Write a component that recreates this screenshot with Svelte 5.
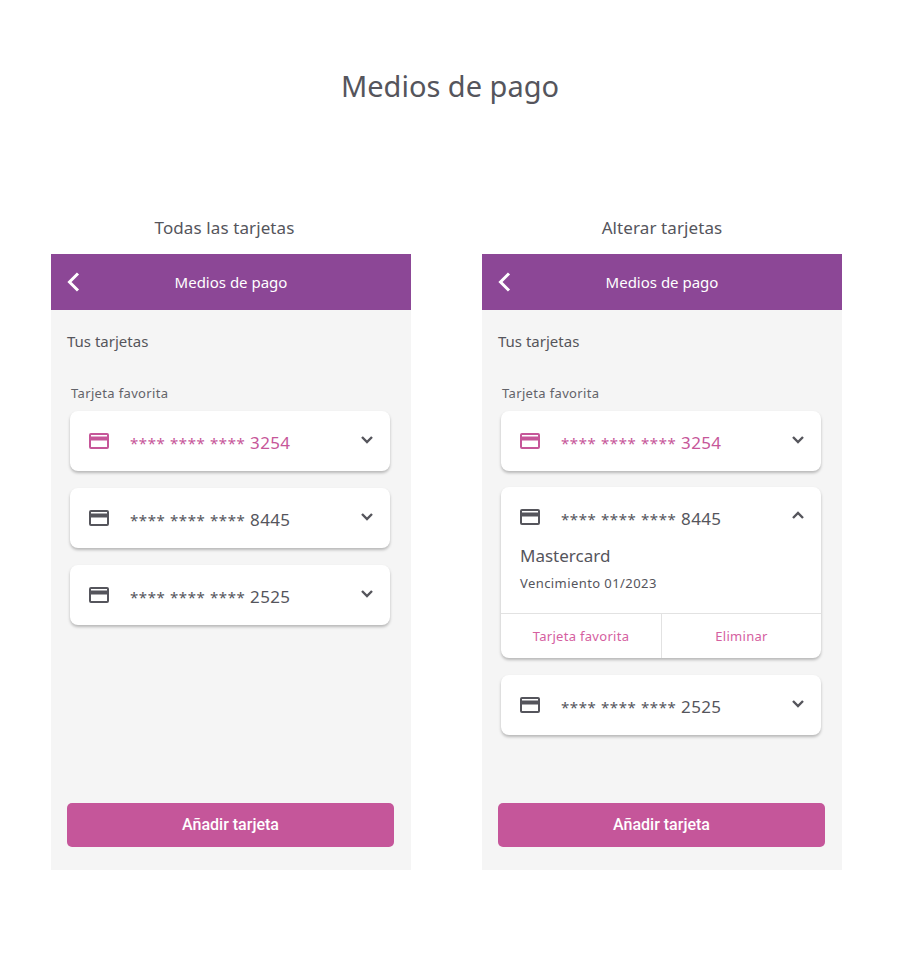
<script>
    const cards = [
        { number: "3254", favorite: true },
        { number: "8445" },
        { number: "2525" },
    ];

    const screens = [
        { label: "Todas las tarjetas", open: null },
        { label: "Alterar tarjetas", open: "8445" },
    ];
</script>

<main class="page">
    <h1>Medios de pago</h1>

    <div class="screens">
        {#each screens as screen}
            <section class="column">
                <h2>{screen.label}</h2>

                <div class="phone">
                    <header>
                        <svg class="back" width="16" height="22" viewBox="0 0 16 22">
                            <path d="M13 2.5 4.500 11l8.500 8.500" fill="none" stroke="#fff" stroke-width="3" />
                        </svg>
                        <span>Medios de pago</span>
                    </header>

                    <div class="body">
                        <p class="title">Tus tarjetas</p>
                        <p class="fav-label">Tarjeta favorita</p>

                        <div class="list">
                            {#each cards as card}
                                {@const isOpen = screen.open === card.number}
                                <article class="card" class:open={isOpen}>
                                    <div class="row" class:fav={card.favorite}>
                                        <svg class="card-icon" width="20" height="16" viewBox="0 0 20 16">
                                            <path
                                                fill="currentColor"
                                                fill-rule="evenodd"
                                                d="M2 0h16a2 2 0 0 1 2 2v12a2 2 0 0 1-2 2H2a2 2 0 0 1-2-2V2a2 2 0 0 1 2-2Zm0 2v1.400h16V2H2Zm0 5.600V14h16V7.600H2Z"
                                            />
                                        </svg>
                                        <span class="number"><span class="stars">**** **** ****</span> {card.number}</span>
                                        <svg class="chevron" width="14" height="9" viewBox="0 0 14 9">
                                            <path
                                                d={isOpen ? "M2 7l5-5 5 5" : "M2 2l5 5 5-5"}
                                                fill="none"
                                                stroke="#55555c"
                                                stroke-width="2.4"
                                            />
                                        </svg>
                                    </div>

                                    {#if isOpen}
                                        <div class="details">
                                            <p class="brand">Mastercard</p>
                                            <p class="expiry">Vencimiento 01/2023</p>
                                        </div>
                                        <div class="actions">
                                            <span>Tarjeta favorita</span>
                                            <span>Eliminar</span>
                                        </div>
                                    {/if}
                                </article>
                            {/each}
                        </div>

                        <button>Añadir tarjeta</button>
                    </div>
                </div>
            </section>
        {/each}
    </div>
</main>

<style>
    :global(body) {
        background: #fff;
        color: #55555c;
        font-family: "Noto Sans", "Open Sans", sans-serif;
    }

    .page {
        height: 980px;
        box-sizing: border-box;
        padding-top: 67px;
    }

    h1 {
        margin: 0;
        font-size: 29px;
        line-height: 38px;
        font-weight: 400;
        text-align: center;
    }

    .screens {
        display: flex;
        gap: 71px;
        padding: 112px 0 0 51px;
    }

    .column {
        width: 360px;
    }

    h2 {
        margin: 0 0 15px;
        font-size: 17px;
        line-height: 22px;
        font-weight: 400;
        text-align: center;
        letter-spacing: 0.1px;
    }

    /* el titulo de la izquierda no esta centrado sobre la pantalla */
    .column:first-child h2 {
        padding-right: 13px;
    }

    .phone {
        height: 616px;
        background: #f5f5f5;
        display: flex;
        flex-direction: column;
    }

    header {
        height: 56px;
        flex: none;
        background: #8c4796;
        color: #fff;
        display: flex;
        align-items: center;
        justify-content: center;
        position: relative;
        font-size: 15px;
    }

    .back {
        position: absolute;
        left: 14px;
        top: 17px;
    }

    .body {
        flex: 1;
        display: flex;
        flex-direction: column;
        padding: 0 17px 23px 16px;
    }

    p {
        margin: 0;
    }

    .title {
        margin-top: 21px;
        font-size: 15px;
        line-height: 20px;
    }

    .fav-label {
        margin: 32px 0 0 4px;
        font-size: 13px;
        line-height: 20px;
        letter-spacing: 0.35px;
        color: #636369;
    }

    .list {
        display: flex;
        flex-direction: column;
        gap: 17px;
        margin: 8px 4px 0 3px;
    }

    .card {
        background: #fff;
        border-radius: 8px;
        box-shadow: 0 2px 3px rgba(0, 0, 0, 0.25);
        overflow: hidden;
    }

    .card.open {
        margin-top: -1px;
    }

    .row {
        height: 60px;
        display: flex;
        align-items: center;
        padding: 0 19px;
        color: #55555c;
    }

    .row.fav {
        color: #c65699;
    }

    .card-icon {
        flex: none;
    }

    .number {
        flex: 1;
        margin: 3px 0 0 21px;
        font-size: 17px;
        letter-spacing: 0.3px;
    }

    .stars {
        font-size: 15px;
        letter-spacing: 0.6px;
    }

    .chevron {
        flex: none;
        margin: -4px -3px 0 0;
    }

    .details {
        padding: 0 19px 21px;
    }

    .brand {
        margin-top: -1px;
        font-size: 17px;
        line-height: 20px;
    }

    .expiry {
        margin-top: 8px;
        font-size: 13px;
        line-height: 18px;
        letter-spacing: 0.42px;
    }

    .actions {
        display: grid;
        grid-template-columns: 1fr 1fr;
        height: 44px;
        border-top: 1px solid #e2e2e2;
        color: #d5609f;
        font-size: 13px;
        letter-spacing: 0.3px;
    }

    .actions span {
        display: flex;
        align-items: center;
        justify-content: center;
    }

    .actions span + span {
        border-left: 1px solid #e2e2e2;
    }

    button {
        margin-top: auto;
        height: 44px;
        flex: none;
        border: 0;
        border-radius: 5px;
        padding-bottom: 2px;
        background: #c5569a;
        color: #fff;
        font-family: Roboto, sans-serif;
        font-size: 16px;
        font-weight: 500;
    }
</style>
